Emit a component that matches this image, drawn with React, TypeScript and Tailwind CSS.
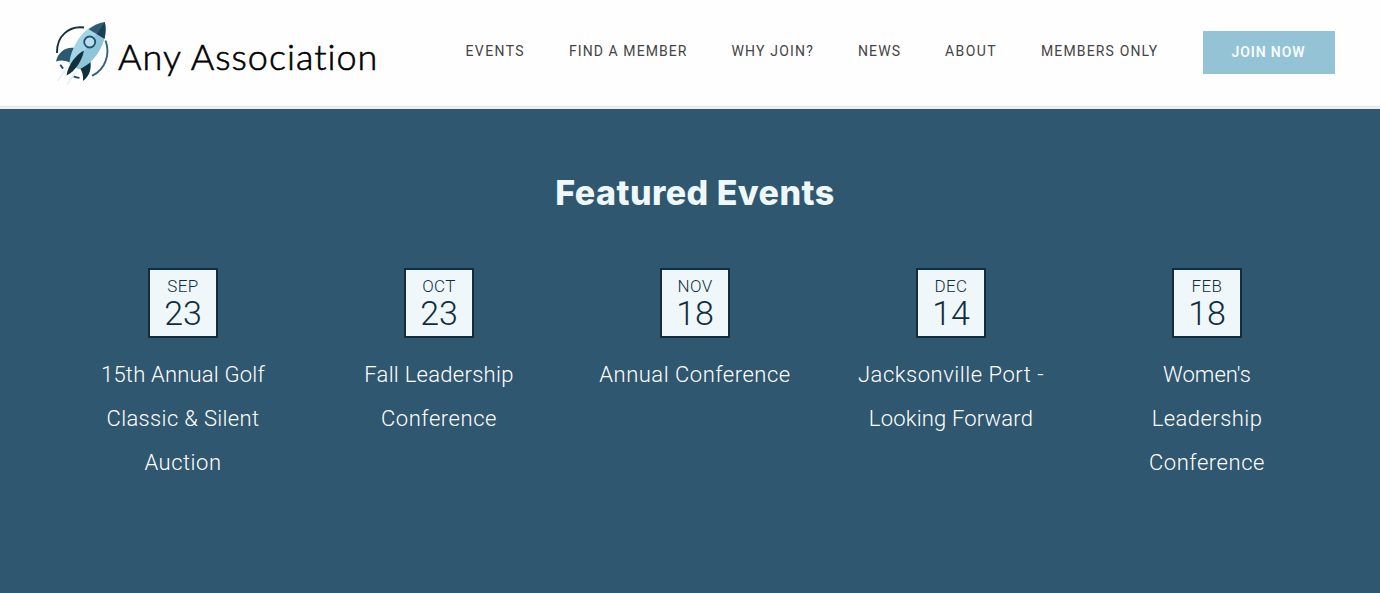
const NAV = [
  { label: "EVENTS", cls: "w-[103.5px] tracking-[1.4px]" },
  { label: "FIND A MEMBER", cls: "w-[162.5px] tracking-[1.08px]" },
  { label: "WHY JOIN?", cls: "w-[126.500px] tracking-[1.18px]" },
  { label: "NEWS", cls: "w-[87px] tracking-[1.1px]" },
  { label: "ABOUT", cls: "w-[96px] tracking-[1.42px]" },
  { label: "MEMBERS ONLY", cls: "w-[162px] tracking-[1.15px]" },
];

const EVENTS = [
  {
    month: "SEP",
    day: "23",
    lines: [
      { text: "15th Annual Golf", cls: "tracking-[0.2px]" },
      { text: "Classic & Silent", cls: "tracking-[0.35px]" },
      { text: "Auction", cls: "tracking-[0.5px]" },
    ],
  },
  {
    month: "OCT",
    day: "23",
    lines: [
      { text: "Fall Leadership", cls: "tracking-[0.28px]" },
      { text: "Conference", cls: "tracking-[0.55px]" },
    ],
  },
  {
    month: "NOV",
    day: "18",
    lines: [{ text: "Annual Conference", cls: "tracking-[0.52px]" }],
  },
  {
    month: "DEC",
    day: "14",
    lines: [
      { text: "Jacksonville Port -", cls: "tracking-[0.52px]" },
      { text: "Looking Forward", cls: "tracking-[0.18px]" },
    ],
  },
  {
    month: "FEB",
    day: "18",
    lines: [
      { text: "Women's", cls: "tracking-[0.05px]" },
      { text: "Leadership", cls: "tracking-[0.45px]" },
      { text: "Conference", cls: "tracking-[0.55px]" },
    ],
  },
];

function Rocket() {
  return (
    <svg viewBox="45 12 80 80" className="h-[80px] w-[80px] shrink-0" fill="none" aria-hidden="true">
      <path d="M84 27.500 C69 25.500 56.500 36 57 53" stroke="#14303f" strokeWidth="1.900" />
      <path d="M105.500 40.500 C110.500 54 105.500 69.500 92 75.900" stroke="#36627c" strokeWidth="1.900" />
      <path d="M60.300 64.800 L63 68.600 M73.500 76.400 Q76.500 77.700 79.500 77.900" stroke="#24485c" strokeWidth="1.900" />
      <path d="M67 67.500 L57.500 81 M76.500 71 L67 84.500" stroke="#e0f1f8" strokeWidth="1.500" />
      <path d="M74.500 48 C66 46.500 58 52 56 61.500 C61 59.500 65 60.500 70 62.500 Z" fill="#2c5871" />
      <path d="M89.500 58 C92.500 67 90 76 83 81 C83.500 75 82 71 79.500 67.500 Z" fill="#123140" />
      <path d="M104.800 22 C95 23.500 84.500 29 77.500 40.500 C72.500 48.500 70 56 69.300 63.500 L78.500 69.300 C87 66 93.500 60 98.500 52 C105 41.500 106.500 31 104.800 22 Z" fill="#a3d5e6" />
      <path d="M104.800 22 C106.500 31 105 41.500 98.500 52 C93.500 60 87 66 78.500 69.300 L74 66.500 Z" fill="#8fc5d8" />
      <path d="M104.800 22 C99 23 93.500 25.500 88.700 29.300 L104.500 38.800 C105.800 33 105.800 27 104.800 22 Z" fill="#315a72" />
      <path d="M104.800 22 L97 34.300 L104.500 38.800 C105.800 33 105.800 27 104.800 22 Z" fill="#1c4053" />
      <path d="M84 50.500 C77 54 68 64 66.500 75.500 C75 71.500 82 61 84 50.500 Z" fill="#123140" />
      <circle cx="89.700" cy="42" r="5.500" fill="#b4e0ee" stroke="#24506a" strokeWidth="1.800" />
    </svg>
  );
}

export default function App() {
  return (
    <div className="flex h-[593px] w-[1380px] flex-col overflow-hidden bg-[#2f576f] font-[Roboto,sans-serif]">
      <header className="flex h-[107px] shrink-0 items-start border-b border-[#e3e5e7] bg-[#fefefe] pl-[45px]">
        <div className="flex w-[420.5px] items-start pt-[12px]">
          <Rocket />
          <span className="-ml-[7px] pt-[16px] font-[Lato,sans-serif] text-[36px] leading-[56px] font-light tracking-[1px] whitespace-nowrap text-black [-webkit-text-stroke:0.6px_#000]">
            Any Association
          </span>
        </div>
        <nav className="flex pt-[31px] text-[14px] leading-[41px] font-[370] text-[#444]">
          {NAV.map((n) => (
            <a key={n.label} className={`shrink-0 whitespace-nowrap ${n.cls}`}>
              {n.label}
            </a>
          ))}
        </nav>
        <a className="mt-[31px] h-[43px] w-[132px] bg-[#94c3d5] pl-[28.5px] text-[14px] leading-[43px] font-semibold tracking-[0.9px] whitespace-nowrap text-[#f8fcfd]">
          JOIN NOW
        </a>
      </header>
      <div className="h-[2px] shrink-0 bg-[#f0f0ee]" />
      <main className="pr-[45px] pl-[55px]">
        <h2 className="mt-[64px] text-center font-[Inter,sans-serif] text-[34px] leading-[40px] font-extrabold tracking-[0.45px] text-[#eef7fa]">
          Featured Events
        </h2>
        <div className="mt-[55px] grid grid-cols-5">
          {EVENTS.map((e) => (
            <article key={e.month} className="flex flex-col items-center">
              <div className="flex h-[70px] w-[70px] flex-col items-center border-2 border-[#102e3e] bg-[#eff7fa] pt-[7px] font-light text-[#102e3e]">
                <span className="text-[17px] leading-[18px] tracking-[0.4px]">{e.month}</span>
                <span className="text-[34px] leading-[36px]">{e.day}</span>
              </div>
              <h3 className="mt-[15px] text-center text-[22px] leading-[44px] font-[330] text-white">
                {e.lines.map((l) => (
                  <span key={l.text} className={`block whitespace-nowrap ${l.cls}`}>
                    {l.text}
                  </span>
                ))}
              </h3>
            </article>
          ))}
        </div>
      </main>
    </div>
  );
}
